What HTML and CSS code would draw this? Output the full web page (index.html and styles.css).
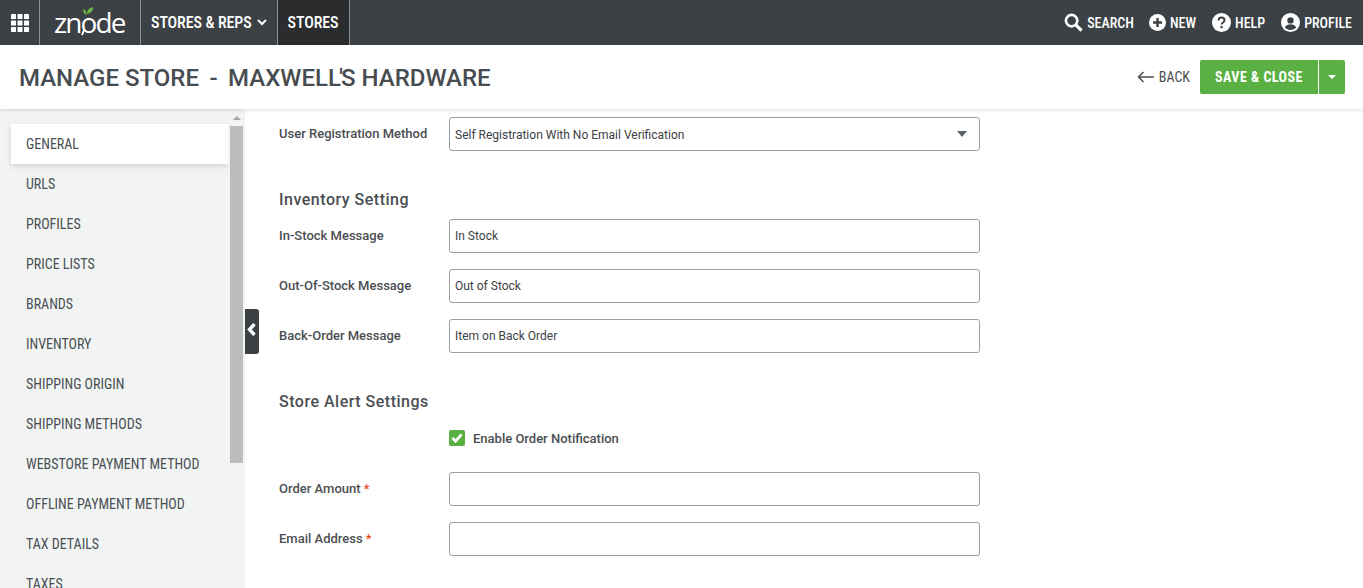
FILE: index.html
```html
<!DOCTYPE html>
<html lang="en">
<head>
<meta charset="utf-8">
<title>Manage Store</title>
<link rel="stylesheet" href="styles.css">
</head>
<body>
<nav class="topbar">
  <a class="tb-cell grid-cell">
    <svg width="18" height="18" viewBox="0 0 18 18" fill="#fff"><rect x="0" y="0" width="5" height="5" rx=".6"/><rect x="6.5" y="0" width="5" height="5" rx=".6"/><rect x="13" y="0" width="5" height="5" rx=".6"/><rect x="0" y="6.5" width="5" height="5" rx=".6"/><rect x="6.5" y="6.5" width="5" height="5" rx=".6"/><rect x="13" y="6.5" width="5" height="5" rx=".6"/><rect x="0" y="13" width="5" height="5" rx=".6"/><rect x="6.5" y="13" width="5" height="5" rx=".6"/><rect x="13" y="13" width="5" height="5" rx=".6"/></svg>
  </a>
  <a class="tb-cell logo-cell">
    <span class="logo-text">znode</span>
    <svg class="logo-leaf" width="14" height="32" viewBox="0 0 14 32"><path d="M5 9C3 8 2 6 2 3c3 1 4 3 3 6z" fill="#6cb33f"/><path d="M6 8c0-4 2-6 6-7 0 4-2 6-6 7z" fill="#6cb33f"/><path d="M3 24l-2 5" stroke="#fff" stroke-width="2" fill="none"/></svg>
  </a>
  <a class="tb-cell menu-cell menu-reps">STORES &amp; REPS
    <svg width="10" height="7" viewBox="0 0 10 7" fill="none" stroke="#fff" stroke-width="2"><path d="M1 1l4 4 4-4"/></svg>
  </a>
  <a class="tb-cell menu-cell active">STORES</a>
  <div class="tb-actions">
    <a class="tb-action tb-search">
      <svg width="19" height="19" viewBox="0 0 20 20" fill="none" stroke="#fff"><circle cx="8" cy="8" r="6" stroke-width="2.8"/><path d="M12.5 12.5l6 6" stroke-width="3.4"/></svg>
      SEARCH</a>
    <a class="tb-action">
      <svg width="17" height="17" viewBox="0 0 17 17"><circle cx="8.5" cy="8.5" r="8.5" fill="#fff"/><path d="M8.5 4v9M4 8.5h9" stroke="#3c4145" stroke-width="2.4"/></svg>
      NEW</a>
    <a class="tb-action">
      <svg width="19" height="19" viewBox="0 0 19 19"><circle cx="9.5" cy="9.5" r="9.5" fill="#fff"/><path d="M6.6 7.4c0-1.8 1.3-2.8 2.9-2.8s3 1 3 2.6c0 2.3-3 2.2-3 4.4" fill="none" stroke="#3c4145" stroke-width="2"/><rect x="8.4" y="13" width="2.2" height="2.2" fill="#3c4145"/></svg>
      HELP</a>
    <a class="tb-action">
      <svg width="19" height="19" viewBox="0 0 19 19"><circle cx="9.5" cy="9.5" r="9.5" fill="#fff"/><circle cx="9.5" cy="7.4" r="3.2" fill="#3c4145"/><path d="M3.8 14.4c1-2.4 3.2-3.2 5.7-3.2s4.7.8 5.7 3.2c-1.4 1.6-3.4 2.5-5.7 2.5s-4.3-.9-5.7-2.5z" fill="#3c4145"/></svg>
      PROFILE</a>
  </div>
</nav>

<header class="pagehead">
  <h1>MANAGE STORE <span class="dash">-</span> MAXWEL<span class="tight">L'</span>S HARDWARE</h1>
  <div class="head-actions">
    <a class="back">
      <svg width="17" height="12" viewBox="0 0 17 12" fill="none" stroke="#4a4f53" stroke-width="1.5"><path d="M17 6H1.5M6.5 1L1.5 6l5 5"/></svg>
      BACK</a>
    <div class="btn-group">
      <button class="btn-save">SAVE &amp; CLOSE</button>
      <button class="btn-caret" aria-label="More"><span class="caret"></span></button>
    </div>
  </div>
</header>

<div class="layout">
  <aside class="sidebar">
    <ul class="side-list">
      <li class="current">GENERAL</li>
      <li>URLS</li>
      <li>PROFILES</li>
      <li>PRICE LISTS</li>
      <li>BRANDS</li>
      <li>INVENTORY</li>
      <li>SHIPPING ORIGIN</li>
      <li>SHIPPING METHODS</li>
      <li>WEBSTORE PAYMENT METHOD</li>
      <li>OFFLINE PAYMENT METHOD</li>
      <li>TAX DETAILS</li>
      <li>TAXES</li>
    </ul>
    <div class="scroll">
      <span class="scroll-up"></span>
      <span class="scroll-thumb"></span>
    </div>
    <button class="collapse" aria-label="Collapse">
      <svg width="9" height="13" viewBox="0 0 9 13" fill="none" stroke="#fff" stroke-width="3.4"><path d="M7.5 1L2.5 6.5l5 5.5"/></svg>
    </button>
  </aside>
  <main class="content">
    <div class="row">
      <label>User Registration Method</label>
      <div class="field select">Self Registration With No Email Verification<span class="sel-arrow"></span></div>
    </div>
    <h2 class="sec-head">Inventory Setting</h2>
    <div class="row"><label>In-Stock Message</label><div class="field">In Stock</div></div>
    <div class="row"><label>Out-Of-Stock Message</label><div class="field">Out of Stock</div></div>
    <div class="row"><label>Back-Order Message</label><div class="field">Item on Back Order</div></div>
    <h2 class="sec-head alert-head">Store Alert Settings</h2>
    <div class="check-row">
      <span class="check">
        <svg width="12" height="10" viewBox="0 0 13 11" fill="none" stroke="#fff" stroke-width="3"><path d="M1.5 5.5l3.5 3.5 6.5-7.5"/></svg>
      </span>
      <span class="check-label">Enable Order Notification</span>
    </div>
    <div class="row"><label>Order Amount <i>*</i></label><div class="field"></div></div>
    <div class="row"><label>Email Address <i>*</i></label><div class="field"></div></div>
  </main>
</div>
</body>
</html>
```
FILE: styles.css
```css
* { box-sizing: border-box; }
html, body { height: 100%; }
body {
  margin: 0;
  overflow: hidden;
  background: #fff;
  font-family: Roboto, "Liberation Sans", sans-serif;
  color: #3c4145;
}
.topbar {
  display: flex;
  height: 45px;
  background: #3c4145;
  color: #fff;
}
.tb-cell {
  display: flex;
  align-items: center;
  height: 45px;
  border-right: 1px solid #8f9396;
}
.grid-cell { width: 40px; justify-content: center; }
.logo-cell { width: 101px; position: relative; padding-left: 14px; }
.logo-text {
  font-family: "Open Sans", sans-serif;
  font-weight: 400;
  font-size: 28px;
  letter-spacing: -1.9px;
  line-height: 45px;
  color: #fff;
}
.logo-leaf { position: absolute; left: 41px; top: 6px; }
.menu-cell {
  gap: 5px;
  padding: 0 10px;
  font-size: 16px;
  font-weight: 500;
  font-stretch: 86%;
  letter-spacing: -.1px;
  color: #fff;
  white-space: nowrap;
}
.menu-cell.active { background: #2b2c2e; }
.tb-actions {
  display: flex;
  align-items: center;
  margin-left: auto;
  padding-right: 11px;
  gap: 16px;
}
.tb-action {
  display: flex;
  align-items: center;
  gap: 4px;
  font-size: 14px;
  font-weight: 500;
  font-stretch: 86%;
  color: #fff;
}
.tb-search { margin-right: -1px; }
.pagehead {
  display: flex;
  align-items: center;
  justify-content: space-between;
  height: 64px;
  padding: 0 18px 0 19px;
  background: #fff;
  box-shadow: 0 1px 4px rgba(0, 0, 0, .14);
  position: relative;
  z-index: 2;
}
h1 {
  margin: 1px 0 0;
  font-size: 24px;
  font-weight: 500;
  color: #474c50;
  white-space: pre;
}
.dash { margin: 0 4.5px; }
.tight { letter-spacing: -2px; }
.head-actions { display: flex; align-items: center; gap: 10px; }
.back {
  display: flex;
  align-items: center;
  gap: 5px;
  font-size: 14px;
  font-stretch: 87%;
  color: #4a4f53;
}
.btn-group { display: flex; height: 34px; }
.btn-save, .btn-caret {
  border: 0;
  background: #5bb044;
  color: #fff;
  font-family: inherit;
  height: 34px;
  padding: 0;
}
.btn-save {
  width: 118px;
  font-size: 14px;
  font-weight: 700;
  font-stretch: 87%;
  letter-spacing: .5px;
  border-radius: 2px 0 0 2px;
}
.btn-caret {
  width: 26px;
  margin-left: 1px;
  border-radius: 0 2px 2px 0;
  display: flex;
  align-items: center;
  justify-content: center;
}
.caret {
  width: 0;
  height: 0;
  border-left: 4px solid transparent;
  border-right: 4px solid transparent;
  border-top: 4px solid #fff;
}
.layout { display: flex; height: calc(100vh - 109px); }
.sidebar {
  position: relative;
  flex: 0 0 245px;
  background: #f2f4f4;
  height: 100%;
}
.side-list {
  list-style: none;
  margin: 0;
  padding: 15px 0 0 11px;
  width: 228px;
  height: 100%;
  overflow: hidden;
}
.side-list li {
  display: flex;
  align-items: center;
  height: 40px;
  padding: 0 0 1px 15px;
  font-size: 14px;
  font-stretch: 87%;
  color: #4a4f53;
  white-space: nowrap;
}
.side-list li.current {
  background: #fff;
  box-shadow: 0 2px 6px rgba(0, 0, 0, .14);
}
.scroll {
  position: absolute;
  top: 0;
  left: 230px;
  width: 13px;
  height: 100%;
}
.scroll-up {
  position: absolute;
  top: 7px;
  left: 3px;
  width: 0;
  height: 0;
  border-left: 4px solid transparent;
  border-right: 4px solid transparent;
  border-bottom: 4px solid #a3a3a3;
}
.scroll-thumb {
  position: absolute;
  top: 17px;
  left: 0;
  width: 13px;
  height: 337px;
  background: #bcbcbc;
}
.collapse {
  position: absolute;
  top: 200px;
  left: 245px;
  width: 14px;
  height: 45px;
  padding: 0 2px 4px 0;
  border: 0;
  border-radius: 0 3px 3px 0;
  background: #3c4145;
  display: flex;
  align-items: center;
  justify-content: center;
  z-index: 3;
}
.content { flex: 1; padding: 8px 0 0 34px; min-width: 0; }
.row {
  display: flex;
  align-items: center;
  height: 34px;
  margin-bottom: 16px;
}
.row label {
  flex: 0 0 170px;
  font-size: 13px;
  font-weight: 500;
  color: #4a4e52;
  margin-top: -1px;
}
.row label i { color: #f04a23; font-style: normal; }
.field {
  position: relative;
  display: flex;
  align-items: center;
  width: 531px;
  height: 34px;
  padding-left: 5px;
  border: 1px solid #9a9fa3;
  border-radius: 3px;
  background: #fff;
  font-size: 12px;
  color: #3c4145;
}
.select { padding-top: 1px; }
.sel-arrow {
  position: absolute;
  right: 12px;
  top: 13px;
  width: 0;
  height: 0;
  border-left: 5px solid transparent;
  border-right: 5px solid transparent;
  border-top: 6px solid #5b6469;
}
h2 {
  margin: 0;
  font-size: 16px;
  font-weight: 500;
  letter-spacing: .5px;
  color: #4a4e52;
  line-height: 18px;
}
.sec-head { margin: 40px 0 10px; }
.alert-head { margin-bottom: 0; }
.check-row {
  display: flex;
  align-items: center;
  gap: 8px;
  height: 16px;
  margin: 19px 0 26px 170px;
}
.check {
  display: flex;
  align-items: center;
  justify-content: center;
  width: 16px;
  height: 16px;
  border-radius: 2px;
  background: #5bb044;
}
.check-label { font-size: 13px; font-weight: 500; color: #4a4e52; }
```
